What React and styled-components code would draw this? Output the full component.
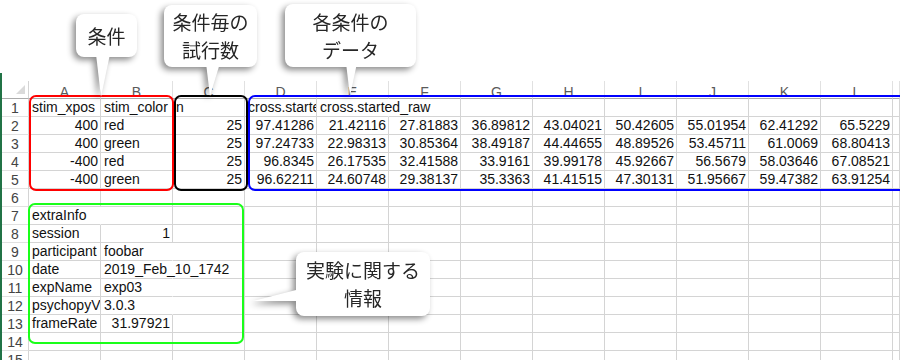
import React from 'react';
import styled, { createGlobalStyle } from 'styled-components';

const GlobalStyle = createGlobalStyle`
  html, body {
    margin: 0;
    padding: 0;
    background: #ffffff;
  }
  body {
    overflow: hidden;
  }
`;

const Screen = styled.div`
  position: relative;
  width: 900px;
  height: 360px;
  overflow: hidden;
  background: #ffffff;
`;

const TopSpace = styled.div`
  height: 73px;
`;

const Sheet = styled.div`
  border-left: 2px solid #217346;
  padding-top: 8px;
  height: 287px;
  box-sizing: border-box;
`;

const Grid = styled.div`
  display: grid;
  grid-template-columns: 27px repeat(12, 72px) 1fr;
  grid-auto-rows: 18px;
  font-family: "Liberation Sans", Arial, sans-serif;
`;

const Corner = styled.div`
  display: flex;
  align-items: flex-end;
  justify-content: flex-end;
  padding: 0 3px 4px 0;
  box-sizing: border-box;
  border-right: 1px solid #d4d4d4;
  border-bottom: 1px solid #ababab;
`;

const CornerMark = styled.div`
  width: 0;
  height: 0;
  border-left: 9px solid transparent;
  border-bottom: 9px solid #dadada;
`;

const ColHead = styled.div`
  display: flex;
  align-items: flex-end;
  justify-content: center;
  box-sizing: border-box;
  border-right: 1px solid #e1e1e1;
  border-bottom: 1px solid #ababab;
  font-size: 14px;
  line-height: 12px;
  color: #5a5a5a;
  overflow: hidden;
`;

const RowHead = styled.div`
  display: flex;
  align-items: center;
  justify-content: center;
  box-sizing: border-box;
  border-right: 1px solid #d4d4d4;
  border-bottom: 1px solid #e1e1e1;
  font-size: 14px;
  color: #444444;
`;

const Cell = styled.div`
  position: relative;
  box-sizing: border-box;
  padding: 0 2px 0 3px;
  border-right: 1px solid ${(p) => (p.$open ? 'transparent' : '#d4d4d4')};
  border-bottom: 1px solid #d4d4d4;
  font-size: 14px;
  line-height: 17px;
  color: #111111;
  white-space: nowrap;
  text-align: ${(p) => (p.$right ? 'right' : 'left')};
  overflow: ${(p) => (p.$open ? 'visible' : 'hidden')};
  z-index: ${(p) => (p.$open ? 1 : 0)};
`;

const Frame = styled.div`
  position: absolute;
  left: ${(p) => p.$x}px;
  top: ${(p) => p.$y}px;
  width: ${(p) => p.$w}px;
  height: ${(p) => p.$h}px;
  box-sizing: border-box;
  border: 2px solid ${(p) => p.$color};
  border-radius: 7px;
  pointer-events: none;
  z-index: 3;
`;

const Callout = styled.div`
  position: absolute;
  left: ${(p) => p.$x}px;
  top: ${(p) => p.$y}px;
  width: ${(p) => p.$w}px;
  height: ${(p) => p.$h}px;
  filter: drop-shadow(-3px 3px 3px rgba(0, 0, 0, 0.45));
  z-index: 4;
`;

const Bubble = styled.div`
  position: relative;
  z-index: 1;
  width: 100%;
  height: 100%;
  display: flex;
  align-items: center;
  justify-content: center;
  text-align: center;
  background: #ffffff;
  border-radius: 8px;
  font-family: "Noto Sans CJK JP", "Liberation Sans", sans-serif;
  font-size: 19px;
  line-height: 28px;
  color: #262626;
`;

const Tail = styled.svg`
  position: absolute;
  left: 0;
  top: 0;
  overflow: visible;
`;

const COLS = ['A', 'B', 'C', 'D', 'E', 'F', 'G', 'H', 'I', 'J', 'K', 'L'];

const DATA = [
  ['stim_xpos', 'stim_color', 'n', 'cross.started', 'cross.started_raw'],
  [400, 'red', 25, 97.41286, 21.42116, 27.81883, 36.89812, 43.04021, 50.42605, 55.01954, 62.41292, 65.5229],
  [400, 'green', 25, 97.24733, 22.98313, 30.85364, 38.49187, 44.44655, 48.89526, 53.45711, 61.0069, 68.80413],
  [-400, 'red', 25, 96.8345, 26.17535, 32.41588, 33.9161, 39.99178, 45.92667, 56.5679, 58.03646, 67.08521],
  [-400, 'green', 25, 96.62211, 24.60748, 29.38137, 35.3363, 41.41515, 47.30131, 51.95667, 59.47382, 63.91254],
  [],
  ['extraInfo'],
  ['session', 1],
  ['participant', 'foobar'],
  ['date', '2019_Feb_10_1742'],
  ['expName', 'exp03'],
  ['psychopyVersion', '3.0.3'],
  ['frameRate', 31.97921],
  [],
  [],
];

const FRAMES = [
  { x: 29, y: 95, w: 145, h: 96, color: '#ff0000' },
  { x: 174, y: 95, w: 74, h: 96, color: '#000000' },
  { x: 248, y: 95, w: 662, h: 96, color: '#0000ff' },
  { x: 28, y: 203, w: 216, h: 141, color: '#1aff1a' },
];

const CALLOUTS = [
  { x: 76, y: 14, w: 61, h: 43, lines: ['条件'], tail: '20,40 34,40 25,83' },
  { x: 164, y: 5, w: 93, h: 62, lines: ['条件毎の', '試行数'], tail: '42,58 56,58 46,91' },
  { x: 285, y: 4, w: 131, h: 63, lines: ['各条件の', 'データ'], tail: '61,59 72,59 65,92' },
  { x: 296, y: 252, w: 134, h: 64, lines: ['実験に関する', '情報'], tail: '4,37 -43,49 4,49' },
];

const isEmpty = (v) => v === undefined || v === null || v === '';

const SheetCell = ({ value, next }) => {
  const right = typeof value === 'number';
  const open = typeof value === 'string' && isEmpty(next);
  return (
    <Cell $right={right} $open={open}>
      {isEmpty(value) ? '' : String(value)}
    </Cell>
  );
};

export default function App() {
  return (
    <>
      <GlobalStyle />
      <Screen>
        <TopSpace />
        <Sheet>
          <Grid>
            <Corner>
              <CornerMark />
            </Corner>
            {COLS.map((c) => (
              <ColHead key={c}>{c}</ColHead>
            ))}
            <ColHead />
            {DATA.map((row, r) => (
              <React.Fragment key={r}>
                <RowHead>{r + 1}</RowHead>
                {COLS.map((c, i) => (
                  <SheetCell key={c} value={row[i]} next={row[i + 1]} />
                ))}
                <Cell />
              </React.Fragment>
            ))}
          </Grid>
        </Sheet>

        {FRAMES.map((f, i) => (
          <Frame key={i} $x={f.x} $y={f.y} $w={f.w} $h={f.h} $color={f.color} />
        ))}

        {CALLOUTS.map((c, i) => (
          <Callout key={i} $x={c.x} $y={c.y} $w={c.w} $h={c.h}>
            <Tail width={c.w} height={c.h}>
              <polygon points={c.tail} fill="#ffffff" />
            </Tail>
            <Bubble>
              <div>
                {c.lines.map((l, j) => (
                  <div key={j}>{l}</div>
                ))}
              </div>
            </Bubble>
          </Callout>
        ))}
      </Screen>
    </>
  );
}
